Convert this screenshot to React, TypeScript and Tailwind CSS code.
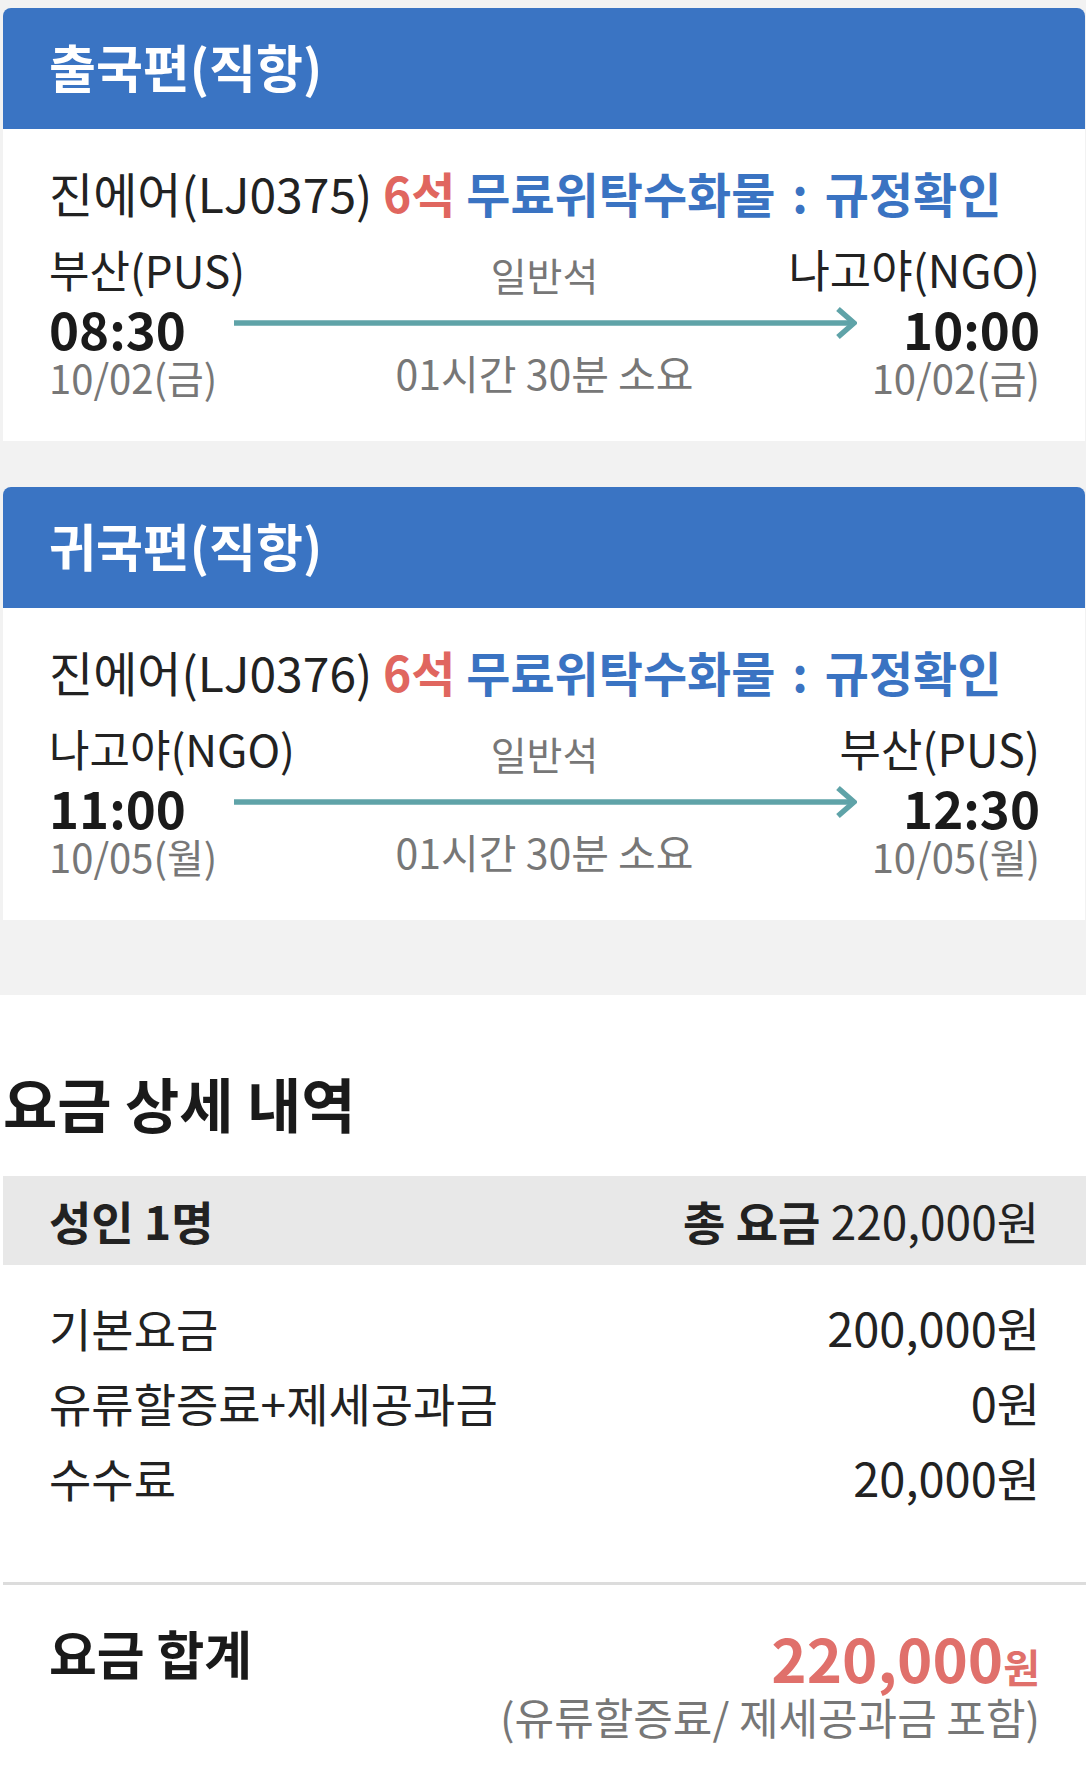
import React from "react";

const TEAL = "#5fa3a8";

function Arrow() {
  return (
    <svg width="623" height="34" viewBox="0 0 623 34" className="block mb-[10px]">
      <line x1="0" y1="17" x2="620" y2="17" stroke={TEAL} strokeWidth="5.5" />
      <polyline points="604,3 620,17 604,31" fill="none" stroke={TEAL} strokeWidth="5.5" strokeLinejoin="miter" />
    </svg>
  );
}

type FlightProps = {
  title: string;
  code: string;
  from: string;
  to: string;
  dep: string;
  arr: string;
  date: string;
};

function FlightCard({ title, code, from, to, dep, arr, date }: FlightProps) {
  return (
    <div className="ml-[3px] mr-[1px] rounded-t-[8px] overflow-hidden">
      <div className="h-[121px] bg-[#3a74c3] flex items-center pl-[46px] pb-[5px]">
        <h2 className="text-white text-[51px] font-bold leading-none">{title}</h2>
      </div>
      <div className="bg-white pl-[46px] pr-[45px] pt-[37px] pb-[43px]">
        <div className="text-[48px] leading-[52px] text-[#222] whitespace-nowrap">
          진에어({code}) <span className="font-bold text-[#e0665f]">6석</span>{" "}
          <span className="font-bold text-[#3a73c2]">
            무료위탁수화물 <span className="mx-[6px]">:</span> 규정확인
          </span>
        </div>
        <div className="grid grid-cols-[1fr_auto_1fr] mt-[25px] h-[52px]">
          <span className="text-[44px] leading-[52px] text-[#222] whitespace-nowrap">{from}</span>
          <span className="text-[39px] leading-[42px] mt-[10px] text-[#777]">일반석</span>
          <span className="justify-self-end text-[45px] leading-[52px] text-[#222] whitespace-nowrap">{to}</span>
        </div>
        <div className="grid grid-cols-[185px_1fr_183px] mt-[5px] h-[56px] items-center">
          <span className="text-[51px] font-bold leading-[56px] text-[#1a1a1a]">{dep}</span>
          <Arrow />
          <span className="text-right text-[51px] font-bold leading-[56px] text-[#1a1a1a]">{arr}</span>
        </div>
        <div className="grid grid-cols-[1fr_auto_1fr] h-[42px]">
          <span className="text-[40px] leading-[42px] text-[#777] whitespace-nowrap">{date}</span>
          <span className="text-[41px] leading-[32px] text-[#777] whitespace-nowrap">01시간 30분 소요</span>
          <span className="justify-self-end text-[40px] leading-[42px] text-[#777] whitespace-nowrap">{date}</span>
        </div>
      </div>
    </div>
  );
}

function FeeRow({ label, value }: { label: string; value: string }) {
  return (
    <div className="h-[75px] flex items-center justify-between text-[45px] text-[#222]">
      <span className="text-[46px]">{label}</span>
      <span className="text-[47px]">{value}</span>
    </div>
  );
}

export default function App() {
  return (
    <div className="w-[1086px] min-h-[1786px] flex flex-col bg-[#f2f2f2] font-['Noto_Sans_CJK_KR',sans-serif]">
      <div className="pt-[8px]">
        <FlightCard
          title="출국편(직항)"
          code="LJ0375"
          from="부산(PUS)"
          to="나고야(NGO)"
          dep="08:30"
          arr="10:00"
          date="10/02(금)"
        />
        <div className="h-[46px]" />
        <FlightCard
          title="귀국편(직항)"
          code="LJ0376"
          from="나고야(NGO)"
          to="부산(PUS)"
          dep="11:00"
          arr="12:30"
          date="10/05(월)"
        />
        <div className="h-[75px]" />
      </div>
      <div className="flex-1 bg-white pt-[76px] pb-[40px]">
        <h2 className="ml-[3px] text-[59px] font-bold leading-[64px] text-[#1a1a1a]">요금 상세 내역</h2>
        <div className="ml-[3px] mt-[41px] h-[89px] bg-[#e8e8e8] flex items-center justify-between pl-[46px] pr-[47px] text-[46px] text-[#222]">
          <span className="font-bold">성인 1명</span>
          <span>
            <span className="font-bold">총 요금</span> 220,000원
          </span>
        </div>
        <div className="ml-[3px] pl-[46px] pr-[46px] pt-[25px]">
          <FeeRow label="기본요금" value="200,000원" />
          <FeeRow label="유류할증료+제세공과금" value="0원" />
          <FeeRow label="수수료" value="20,000원" />
        </div>
        <div className="ml-[3px] mt-[67px] h-[3px] bg-[#dcdcdc]" />
        <div className="ml-[3px] pl-[46px] pr-[46px] flex justify-between items-start">
          <span className="mt-[40px] text-[52px] font-bold leading-[56px] text-[#1a1a1a]">요금 합계</span>
          <div className="mt-[40px] flex flex-col items-end">
            <div className="h-[64px] flex items-center">
              <span className="leading-none font-bold text-[#e0706b] whitespace-nowrap">
                <span className="text-[60px] leading-none">220,000</span>
                <span className="text-[40px] leading-none">원</span>
              </span>
            </div>
            <span className="mt-[5px] text-[43px] leading-[44px] text-[#777] whitespace-nowrap">
              (유류할증료/ 제세공과금 포함)
            </span>
          </div>
        </div>
      </div>
    </div>
  );
}
